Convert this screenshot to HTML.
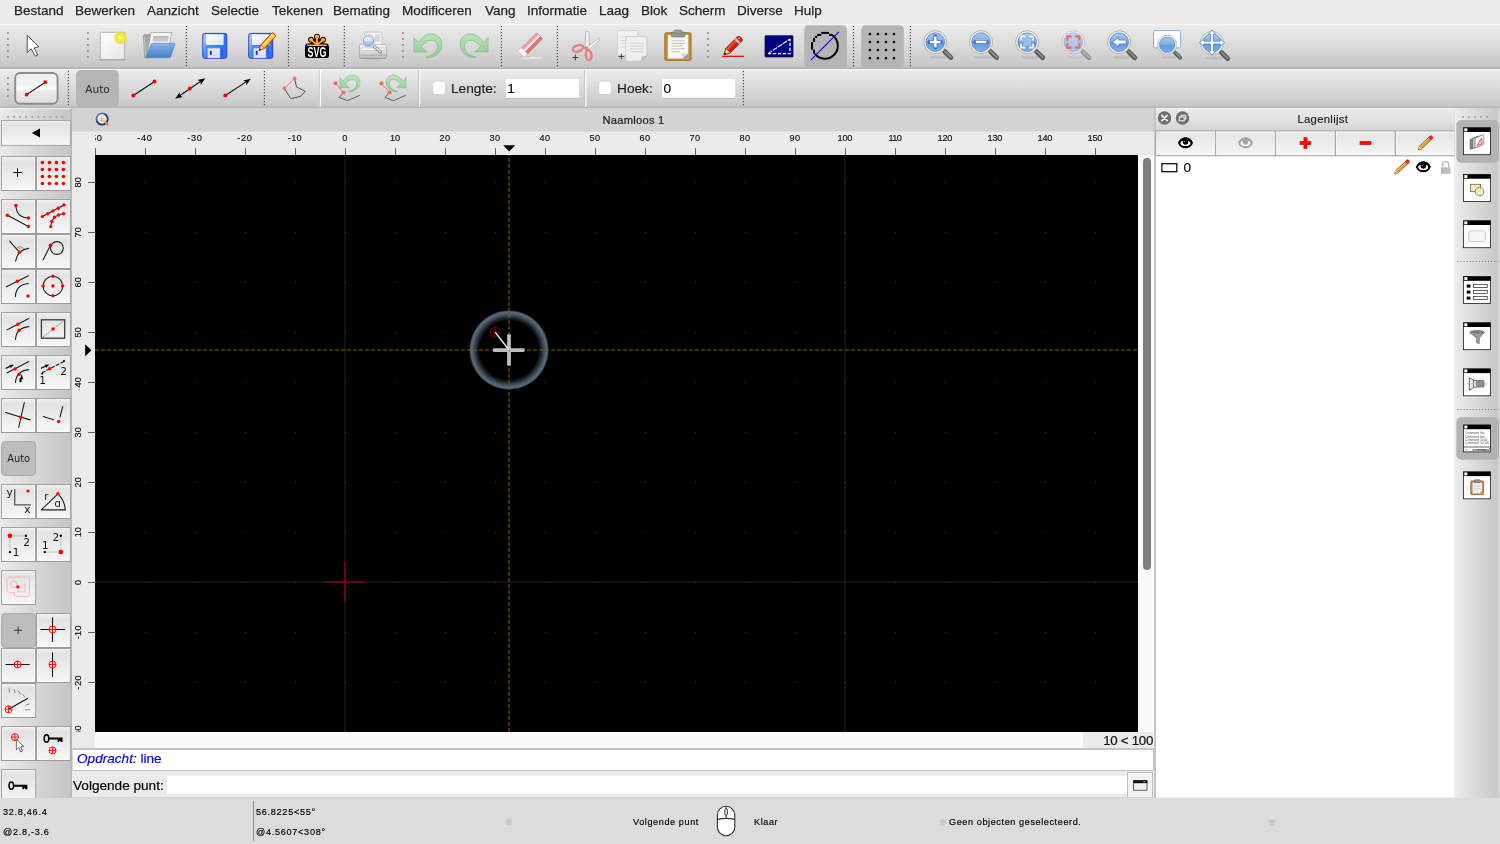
<!DOCTYPE html>
<html lang="nl"><head><meta charset="utf-8"><title>QCAD - Naamloos 1</title>
<style>
html,body{margin:0;padding:0}
body{width:1500px;height:844px;overflow:hidden;position:relative;background:#ececec;font-family:"Liberation Sans",sans-serif;color:#222;font-size:13px}
.a,.a>*{position:absolute}
body>div{will-change:transform}
.a *{box-sizing:border-box}
svg{display:block;overflow:visible;font-family:"Liberation Sans",sans-serif}
#menubar{left:0;top:0;width:1500px;height:24px;background:#ececec}
#menubar span{top:3px;font-size:13.5px;line-height:16px;white-space:nowrap;color:#242424;-webkit-text-stroke:.25px #242424}
#tb1{left:0;top:24px;width:1500px;height:45px;background:linear-gradient(#f9f9f9 0,#ececec 1.5px,#e8e8e8 12%,#dadada 50%,#cbcbcb 85%,#c5c5c5 95%,#b3b3b3 98%,#b3b3b3 100%)}
#tb2{left:0;top:69px;width:1500px;height:39px;background:linear-gradient(#f8f8f8 0,#ececec 1.5px,#e8e8e8 12%,#dadada 50%,#cccccc 85%,#c6c6c6 94%,#b8b8b8 98%,#b8b8b8 100%)}
.hv{width:2px;background-image:radial-gradient(circle at 1px 1px,#7a7a7a 0.75px,transparent 1.1px);background-size:2px 4px}
.hh{height:2px;background-image:radial-gradient(circle at 1px 1px,#8a8a8a 0.75px,transparent 1.1px);background-size:4px 2px}
.pr{background:#b4b4b4;border-radius:4px}
.ic{width:32px;height:32px}
#left{left:0;top:108px;width:72px;height:690px;background:linear-gradient(90deg,#ebebeb 0,#e6e6e6 10%,#d4d4d4 55%,#c6c6c6 97%,#b4b4b4 100%)}
.lb{width:34px;height:34px;border:1px solid #a2a2a2;background:linear-gradient(#e4e4e4 0,#ebebeb 45%,#f6f6f6 100%);box-shadow:inset 0 0 0 1px rgba(255,255,255,.55)}
.lb svg{left:-1px;top:-1px}
.lp{width:34px;height:34px;border:1px solid #a4a4a4;border-radius:4px;background:#bebebe}
#doc{left:72px;top:108px;width:1083px;height:690px;background:#ebebeb}
#doctitle{left:0;top:0;width:1083px;height:24px;background:linear-gradient(#d3d3d3 0,#d3d3d3 23px,#dcdcdc 23px,#dcdcdc 24px)}
#doctitle span{left:0;width:1123px;top:5px;text-align:center;font-size:11.2px;line-height:14px;color:#1c1c1c;letter-spacing:.25px}
#canvas{left:23px;top:47px;width:1043px;height:577px;background:#000;overflow:hidden}
#rtop,#rleft{overflow:hidden}
#vs{left:1066px;top:47px;width:16px;height:594px;background:#fafafa}
#vs i{left:5px;top:3px;width:8px;height:411.5px;border-radius:4px;background:#7f7f7f}
#hs{left:23px;top:624px;width:1059px;height:17px;background:#fafafa}
#zl{left:1011px;top:624px;width:70px;height:17px;background:#ebebeb;font-size:13.3px;line-height:17px;text-align:right;color:#111;padding-right:0;white-space:nowrap;letter-spacing:-.3px;overflow:hidden}
#hist{left:0;top:640px;width:1082px;height:23px;background:#fff;border:1px solid #c2c2c2;border-width:2px 1px 1px 1px;border-top-color:#c6c6c6;border-left-color:#d6d6d6}
#hist span{left:4px;top:1px;font-size:13.6px;line-height:16px;color:#0a0ac8;white-space:nowrap}
#cl{left:0;top:663px;width:1082px;height:27px;background:#ebebeb}
#cl span{left:1px;top:7px;font-size:13.6px;line-height:16px;color:#000;white-space:nowrap}
#cl i{left:95px;top:5px;width:960px;height:18px;background:#fff}
#cl b{left:1055px;top:1px;width:26px;height:26px;border:1px solid #bcbcbc;background:#f3f3f3;font-weight:normal}
#split{left:1154px;top:108px;width:2px;height:690px;background:linear-gradient(90deg,#cfcfcf 0,#bdbdbd 50%,#c6c6c6 100%)}
#panel{left:1156px;top:108px;width:298px;height:690px;background:#fff}
#ptitle{left:0;top:0;width:298px;height:23px;background:linear-gradient(#efefef,#e4e4e4 50%,#d6d6d6)}
#ptitle span{left:0;width:298px;top:4px;text-align:center;font-size:12.2px;line-height:14px;color:#1c1c1c;letter-spacing:.2px;padding-left:34px}
.pb{top:23px;width:59px;height:24px;border:1px solid #b0b0b0;background:linear-gradient(#e3e3e3,#efefef 50%,#f6f6f6)}
#right{left:1455px;top:108px;width:45px;height:690px;background:linear-gradient(90deg,#f0f0f0 0,#e9e9e9 6%,#d9d9d9 50%,#c8c8c8 92%,#d8d8d8 100%)}
.wi{width:28px;height:28px}
#status{left:0;top:798px;width:1500px;height:46px;background:#dcdcdc}
#status span{font-size:9.1px;line-height:12px;color:#111;white-space:nowrap;letter-spacing:.6px}
#status .n{letter-spacing:.72px}
#status i{width:6px;height:6px;border-radius:3px;background:#c9c9c9}
#doctitle span,#cl span,#zl{-webkit-text-stroke:.22px #1a1a1a}
#status span{-webkit-text-stroke:.16px #000;color:#000}
#hist span{-webkit-text-stroke:.2px #0a0ac8}
.tk{stroke:#1a1a1a;stroke-width:.16px}
</style></head>
<body>
<div id="menubar" class="a">
<span style="left:14px">Bestand</span><span style="left:75px">Bewerken</span><span style="left:147px">Aanzicht</span><span style="left:211px">Selectie</span><span style="left:272px">Tekenen</span><span style="left:333px">Bemating</span><span style="left:402px">Modificeren</span><span style="left:485px">Vang</span><span style="left:527px">Informatie</span><span style="left:599px">Laag</span><span style="left:641px">Blok</span><span style="left:679px">Scherm</span><span style="left:737px">Diverse</span><span style="left:794px">Hulp</span>
</div>
<div id="tb1" class="a">
<svg width="1500" height="45" viewBox="0 24 1500 45" style="left:0;top:0">
<defs>
<linearGradient id="gpage" x1="0" y1="0" x2="1" y2="1"><stop offset="0" stop-color="#fff"/><stop offset="1" stop-color="#e6e6e6"/></linearGradient>
<radialGradient id="gglow"><stop offset="0" stop-color="#ffffc8"/><stop offset=".35" stop-color="#f6ee3c"/><stop offset=".75" stop-color="#eee220" stop-opacity=".85"/><stop offset="1" stop-color="#eee220" stop-opacity="0"/></radialGradient>
<linearGradient id="gfold" x1="0" y1="0" x2="0" y2="1"><stop offset="0" stop-color="#86aee6"/><stop offset="1" stop-color="#4a80cc"/></linearGradient>
<linearGradient id="gsave" x1="0" y1="0" x2="1" y2="0.3"><stop offset="0" stop-color="#7fb2ff"/><stop offset=".12" stop-color="#a4caff"/><stop offset=".3" stop-color="#4a8cff"/><stop offset="1" stop-color="#2f72f4"/></linearGradient>
<linearGradient id="glabel" x1="0" y1="0" x2="1" y2="1"><stop offset="0" stop-color="#fff"/><stop offset="1" stop-color="#d6e2fc"/></linearGradient>
<linearGradient id="ggreen" x1="0" y1="0" x2="0" y2="1"><stop offset="0" stop-color="#c0e2b6"/><stop offset="1" stop-color="#8fcb96"/></linearGradient>
<linearGradient id="gprn" x1="0" y1="0" x2="0" y2="1"><stop offset="0" stop-color="#f6f6f6"/><stop offset="1" stop-color="#c4c4c4"/></linearGradient>
<linearGradient id="gglass" x1="0" y1="0" x2="0" y2="1"><stop offset="0" stop-color="#a9c6ec"/><stop offset=".48" stop-color="#84ace2"/><stop offset=".52" stop-color="#6397dc"/><stop offset="1" stop-color="#7eb0ea"/></linearGradient>
<linearGradient id="gglass2" x1="0" y1="0" x2="0" y2="1"><stop offset="0" stop-color="#e2ecf8"/><stop offset=".55" stop-color="#b4cdee"/><stop offset="1" stop-color="#94b6e4"/></linearGradient>
<linearGradient id="gpen" x1="0" y1="0" x2="0" y2="1"><stop offset="0" stop-color="#ff9c00"/><stop offset=".5" stop-color="#ffd21a"/><stop offset="1" stop-color="#ffb400"/></linearGradient>
<g id="hdl" fill="#8f8f8f"><rect x="-0.9" y="32.1" width="1.8" height="1.8"/><rect x="-0.9" y="38" width="1.8" height="1.8"/><rect x="-0.9" y="44" width="1.8" height="1.8"/><rect x="-0.9" y="50" width="1.8" height="1.8"/><rect x="-0.9" y="55.9" width="1.8" height="1.8"/></g>
<path id="sep1" d="M0 25.9V66.4" stroke="#4c4c4c" stroke-width="1.15" stroke-dasharray="1.25 1.75" fill="none"/>
<g id="mag"><ellipse cx="3" cy="15.200" rx="10" ry="1.700" fill="#000" fill-opacity=".08"/><path d="M9.400 9.600L15.600 15.700" stroke="#555" stroke-width="4.700" stroke-linecap="round"/><path d="M9.800 9.600L15.700 15.400" stroke="#8e8e8e" stroke-width="1.900" stroke-linecap="round"/><circle cy=".2" r="11.500" fill="#efefe9" stroke="#a6a69e" stroke-width=".8"/><circle cy=".2" r="9.300" fill="url(#gglass)" stroke="#5d87c6" stroke-width=".8"/></g>
<g id="magd" opacity=".45"><use href="#mag"/></g>
</defs>
<use href="#hdl" x="7.9"/>
<use href="#hdl" x="87.9"/>
<use href="#hdl" x="402.9"/>
<use href="#hdl" x="708"/>
<use href="#sep1" x="186.4"/>
<use href="#sep1" x="288.5"/>
<use href="#sep1" x="344.3"/>
<use href="#sep1" x="501.4"/>
<use href="#sep1" x="557.4"/>
<use href="#sep1" x="853.5"/>
<use href="#sep1" x="910.4"/>
<g transform="translate(0 22) scale(0.12666)">
<path d="M215 105V240L247 212 278 270 298 262 270 205 306 195Z" fill="#fff" stroke="#4a4a4a" stroke-width="7.5" stroke-linejoin="round"/>
<rect x="786" y="290" width="204" height="14" rx="6" fill="#000" fill-opacity=".18"/>
<rect x="792" y="82" width="192" height="214" rx="9" fill="url(#gpage)" stroke="#a2a2a2" stroke-width="6"/>
<path d="M806 160h10M806 216h10" stroke="#ccc" stroke-width="4"/>
<circle cx="952" cy="125" r="56" fill="url(#gglow)"/>
<path d="M1142 282L1133 112q0-12 12-12h36l8 12h20l-40 170z" fill="#a9a9a9" stroke="#7c7c7c" stroke-width="5" stroke-linejoin="round"/>
<path d="M1146 270L1140 118" stroke="#e6e6e6" stroke-width="4" fill="none"/>
<path d="M1160 262L1192 84h164l-18 96z" fill="#fbfbfb" stroke="#8d8d8d" stroke-width="5" stroke-linejoin="round"/>
<path d="M1212 108h124l-10 48h-124z" fill="#c9c9c9"/><path d="M1214 118h118" stroke="#b4b4b4" stroke-width="8"/>
<path d="M1166 282q-12 0-8-12L1190 178q4-10 14-10h168q10 0 7 10l-30 94q-4 10-14 10z" fill="url(#gfold)" stroke="#4a7fc8" stroke-width="5" stroke-linejoin="round"/>
<path d="M1200 180h166" stroke="#9cc0ee" stroke-width="5" fill="none"/>
</g>
<g transform="translate(185 22) scale(0.12666)">
<g transform="translate(0 0)"><rect x="140" y="90" width="190" height="197" rx="16" fill="url(#gsave)" stroke="#2b2bb4" stroke-width="7"/><rect x="166" y="97" width="139" height="84" rx="4" fill="url(#glabel)"/><rect x="180" y="206" width="96" height="78" fill="#e4e8f4"/><rect x="180" y="206" width="96" height="78" fill="none" stroke="#aab4d8" stroke-width="4"/><rect x="196" y="226" width="15" height="36" rx="5" ry="6" fill="#1030e0"/><path d="M290 204v76" stroke="#2a60f0" stroke-width="14"/><path d="M180 262h96" stroke="#c4c8dc" stroke-width="5"/></g>
<g transform="translate(363 0)"><rect x="140" y="90" width="190" height="197" rx="16" fill="url(#gsave)" stroke="#2b2bb4" stroke-width="7"/><rect x="166" y="97" width="139" height="84" rx="4" fill="url(#glabel)"/><rect x="180" y="206" width="96" height="78" fill="#e4e8f4"/><rect x="180" y="206" width="96" height="78" fill="none" stroke="#aab4d8" stroke-width="4"/><rect x="196" y="226" width="15" height="36" rx="5" ry="6" fill="#1030e0"/><path d="M290 204v76" stroke="#2a60f0" stroke-width="14"/><path d="M180 262h96" stroke="#c4c8dc" stroke-width="5"/></g>
<g transform="translate(585 225) rotate(-47.2)"><path d="M0 0L42-20H164q14 0 14 14V6q0 14-14 14H42Z" fill="url(#gpen)" stroke="#c4300e" stroke-width="7" stroke-linejoin="round"/><path d="M44-6H160" stroke="#ffee90" stroke-width="10"/><path d="M160-18v36" stroke="#f4e0c8" stroke-width="8"/><path d="M0 0L42-20V20Z" fill="#f0d6b0" stroke="#b04818" stroke-width="5" stroke-linejoin="round"/><path d="M0 0L16-8V8Z" fill="#222"/></g>
</g>
<g transform="translate(298 26) scale(0.06667)">
<g fill="#000" stroke="#000" stroke-width="26" stroke-linejoin="round" stroke-linecap="round"><circle cx="285" cy="160" r="31"/><circle cx="195" cy="206" r="30"/><circle cx="375" cy="206" r="30"/><path d="M285 290V162M285 290L197 208M285 290L373 208M140 290H430" stroke-width="58"/></g>
<path d="M150 292L285 150 420 292z" fill="#000"/><rect x="105" y="284" width="360" height="196" rx="34" fill="#000"/>
<g fill="#ffa827" stroke="#ffa827" stroke-linecap="round"><circle cx="285" cy="160" r="31" stroke="none"/><circle cx="195" cy="206" r="30" stroke="none"/><circle cx="375" cy="206" r="30" stroke="none"/><path d="M285 282V170" stroke-width="32"/><path d="M280 282L203 212M290 282L367 212" stroke-width="30"/><path d="M146 288H424" stroke-width="24"/></g>
<text x="285" y="462" font-size="222" font-weight="bold" fill="#fff" text-anchor="middle" textLength="284" lengthAdjust="spacingAndGlyphs">SVG</text>
</g>
<g transform="translate(350 22) scale(0.12666)">
<ellipse cx="182" cy="286" rx="108" ry="10" fill="#000" fill-opacity=".2"/>
<rect x="118" y="80" width="134" height="110" rx="6" fill="#fafafa" stroke="#b0b0b0" stroke-width="5"/>
<rect x="196" y="96" width="44" height="60" fill="#d8d8d8"/>
<rect x="74" y="176" width="216" height="108" rx="14" fill="url(#gprn)" stroke="#9a9a9a" stroke-width="5"/>
<rect x="92" y="206" width="180" height="18" rx="6" fill="#fff" stroke="#aaa" stroke-width="3"/>
<path d="M82 262h200" stroke="#a8a8a8" stroke-width="8"/>
<path d="M186 190L240 236" stroke="#8a8a8a" stroke-width="26" stroke-linecap="round"/><path d="M190 192L238 234" stroke="#e0e0e0" stroke-width="13" stroke-linecap="round"/>
<circle cx="146" cy="150" r="54" fill="#f4f4f4" stroke="#c4c4c4" stroke-width="4"/><circle cx="146" cy="150" r="42" fill="url(#gglass2)" stroke="#5a8cd2" stroke-width="6"/><ellipse cx="138" cy="136" rx="26" ry="18" fill="#fff" fill-opacity=".5"/>
</g>
<g transform="translate(405 26) scale(0.06000)">
<path d="M148 190L148 432 365 432 275 340C330 280 380 240 430 240 500 240 540 280 540 340 540 420 470 490 350 515L352 530C500 530 615 440 615 310 615 200 540 130 440 130 350 130 280 200 215 270Z" fill="url(#ggreen)" stroke="#72b481" stroke-width="9" stroke-linejoin="round"/>
<g transform="translate(1533 0) scale(-1 1)"><path d="M148 190L148 432 365 432 275 340C330 280 380 240 430 240 500 240 540 280 540 340 540 420 470 490 350 515L352 530C500 530 615 440 615 310 615 200 540 130 440 130 350 130 280 200 215 270Z" fill="url(#ggreen)" stroke="#72b481" stroke-width="9" stroke-linejoin="round"/></g>
</g>
<g transform="translate(500 22) scale(0.12666)">
<ellipse cx="245" cy="282" rx="88" ry="8" fill="#fff" fill-opacity=".55"/><ellipse cx="200" cy="276" rx="50" ry="6" fill="#000" fill-opacity=".12"/>
<g transform="translate(240 181) rotate(-45)"><rect x="-104" y="-35" width="208" height="70" rx="8" fill="#e4858a"/><rect x="-104" y="-35" width="208" height="24" rx="6" fill="#eda2a4"/><rect x="-70" y="-11" width="174" height="20" fill="#f1eded"/><rect x="-70" y="9" width="174" height="26" fill="#dc7278"/><rect x="-104" y="-35" width="38" height="70" rx="6" fill="#f6f6f6" stroke="#c4c4c4" stroke-width="4"/><path d="M104-30v60" stroke="#a9a0a0" stroke-width="5"/></g>
<path d="M672 200L676 84q2-14 14-14 12 0 12 14L706 196z" fill="#f1f1f1" stroke="#a5a5a5" stroke-width="5" stroke-linejoin="round"/>
<path d="M690 196L784 124q6 6 2 18L708 214z" fill="#f6f6f6" stroke="#a5a5a5" stroke-width="5" stroke-linejoin="round"/>
<ellipse cx="616" cy="208" rx="42" ry="24" transform="rotate(-18 616 208)" fill="none" stroke="#e3838a" stroke-width="20"/>
<ellipse cx="700" cy="262" rx="22" ry="40" transform="rotate(-8 700 262)" fill="none" stroke="#e3838a" stroke-width="20"/>
<path d="M654 198L690 196 700 224 672 224z" fill="#e3838a"/>
<path d="M572 280h46M595 257v46" stroke="#222" stroke-width="6.5"/>
<rect x="928" y="68" width="160" height="196" rx="8" fill="#f0f0f0" stroke="#c6c6c6" stroke-width="5"/>
<path d="M950 120h60M950 146h60M950 172h60M950 198h60" stroke="#d8d8d8" stroke-width="7"/>
<path d="M993 123q0-8 8-8h150q8 0 8 8v146l-42 40H1001q-8 0-8-8z" fill="#efefef" stroke="#bdbdbd" stroke-width="5" stroke-linejoin="round"/>
<path d="M1026 168h106M1026 190h106M1026 212h106M1026 234h106" stroke="#d2d2d2" stroke-width="7"/>
<path d="M1159 269l-42 40 4-34z" fill="#c4c4c4" stroke="#a8a8a8" stroke-width="4" stroke-linejoin="round"/>
<path d="M935 272h46M958 249v46" stroke="#222" stroke-width="6.5"/>
</g>
<g transform="translate(655 22) scale(0.12666)">
<rect x="77" y="84" width="208" height="220" rx="12" fill="#c98a2a" stroke="#9c671a" stroke-width="6"/>
<rect x="100" y="100" width="164" height="190" rx="3" fill="#f7f7f5" stroke="#a89a80" stroke-width="3"/>
<path d="M130 148h106M130 170h106M130 190h88M130 212h106M130 234h66" stroke="#c6c6c6" stroke-width="8"/>
<path d="M264 246v44h-50z" fill="#9a9a9a"/><path d="M214 290v-44h50z" fill="#d8d8d8"/>
<rect x="128" y="80" width="108" height="38" rx="10" fill="#96968c" stroke="#6c6c64" stroke-width="5"/><rect x="152" y="64" width="60" height="24" rx="8" fill="#a4a49a" stroke="#6c6c64" stroke-width="5"/>
<g transform="translate(545 258) rotate(-45)"><path d="M0 0L46-25H172q18 0 18 18V7q0 18-18 18H46Z" fill="#e0201a" stroke="#5e2a0a" stroke-width="6" stroke-linejoin="round"/><path d="M48-12H140" stroke="#f0602a" stroke-width="12"/><path d="M48 10H140" stroke="#c8101a" stroke-width="10"/><rect x="142" y="-25" width="18" height="50" fill="#d4c4c4" stroke="#8a6a6a" stroke-width="2"/><circle cx="176" cy="-8" r="8" fill="#ff8a80"/><path d="M0 0L46-25V25Z" fill="#ecc9a0" stroke="#5e3a1a" stroke-width="5" stroke-linejoin="round"/><path d="M0 0L18-10V10Z" fill="#111"/></g>
<path d="M530 271H703" stroke="#f00" stroke-width="10"/>
<rect x="868.5" y="108" width="221" height="168" rx="4" fill="#000083" stroke="#14142e" stroke-width="6"/>
<path d="M892 250H1066V134" fill="none" stroke="#fff" stroke-width="10" stroke-dasharray="26 13"/><path d="M892 250L1066 134" stroke="#fff" stroke-width="8.5" stroke-dasharray="40 7"/>
<rect x="1178" y="25" width="337" height="340" rx="34" fill="#b5b5b5"/>
</g>
<g transform="translate(800 24) scale(0.07334)">
<path d="M445.900 156.400A176 176 0 1 1 203.200 407.800" fill="none" stroke="#000" stroke-width="27"/>
<g fill="#000"><rect x="290" y="108" width="105" height="27"/><rect x="235" y="135" width="55" height="27"/><rect x="395" y="135" width="55" height="27"/><rect x="205" y="162" width="30" height="28"/><rect x="178" y="190" width="27" height="55"/><rect x="150" y="245" width="28" height="105"/><rect x="178" y="350" width="27" height="55"/></g>
<path d="M150 490L530 108" stroke="#0000ff" stroke-width="14"/>
</g>
<g transform="translate(800 22) scale(0.12666)">
<rect x="483" y="25" width="337" height="340" rx="34" fill="#b5b5b5"/>
<rect x="543" y="86" width="18" height="18" fill="#000"/>
<rect x="606" y="86" width="18" height="18" fill="#000"/>
<rect x="670" y="86" width="18" height="18" fill="#000"/>
<rect x="733" y="86" width="18" height="18" fill="#000"/>
<rect x="543" y="149" width="18" height="18" fill="#000"/>
<rect x="606" y="149" width="18" height="18" fill="#000"/>
<rect x="670" y="149" width="18" height="18" fill="#000"/>
<rect x="733" y="149" width="18" height="18" fill="#000"/>
<rect x="543" y="212" width="18" height="18" fill="#000"/>
<rect x="606" y="212" width="18" height="18" fill="#000"/>
<rect x="670" y="212" width="18" height="18" fill="#000"/>
<rect x="733" y="212" width="18" height="18" fill="#000"/>
<rect x="543" y="276" width="18" height="18" fill="#000"/>
<rect x="606" y="276" width="18" height="18" fill="#000"/>
<rect x="670" y="276" width="18" height="18" fill="#000"/>
<rect x="733" y="276" width="18" height="18" fill="#000"/>
</g>
<use href="#mag" x="935.3" y="41.9"/><path d="M929.6 41.9h11.4M935.3 36.2v11.4" stroke="#3f6fc0" stroke-width="4" stroke-linecap="round"/><path d="M930 41.9h10.600M935.3 36.6v10.600" stroke="#fff" stroke-width="2.500"/>
<use href="#mag" x="981.1" y="41.9"/><path d="M975.4 41.9h11.4" stroke="#3f6fc0" stroke-width="4" stroke-linecap="round"/><path d="M975.8 41.9h10.600" stroke="#fff" stroke-width="2.500"/>
<use href="#mag" x="1027.2" y="42"/><rect x="1023.2" y="38.2" width="8" height="7.600" fill="#9dbdee"/><path d="M1021.200 40.400v-4h4.200M1029 36.400h4.200v4M1033.200 43.600v4h-4.200M1025.400 47.600h-4.200v-4" fill="none" stroke="#fff" stroke-width="1.700"/>
<g opacity=".5"><use href="#mag" x="1073.3" y="42"/></g><rect x="1069.3" y="38.2" width="8" height="7.600" fill="#b9cdee" fill-opacity=".8"/><path d="M1067.300 40.400v-4h4.200M1075.100 36.400h4.200v4M1079.300 43.600v4h-4.200M1071.500 47.600h-4.200v-4" fill="none" stroke="#ee6a6a" stroke-width="2.100"/>
<use href="#mag" x="1119.2" y="42"/><path d="M1112.600 42l6.200-4.800v2.900h7.400v3.800h-7.400v2.900z" fill="#fff" stroke="#3f6fc0" stroke-width=".7" stroke-linejoin="round"/>
<rect x="1153.600" y="30.600" width="27" height="17.200" rx="1" fill="#fff" stroke="#7fa4dc" stroke-width=".9"/>
<g transform="translate(1167.200 44.600) scale(.83)"><use href="#mag"/></g>
<use href="#mag" x="1212" y="42.800"/><path d="M1212 30l3.400 4.400h-2v6.800h6.800v-2l4.400 3.400-4.400 3.400v-2h-6.800v6.800h2l-3.400 4.400-3.400-4.400h2v-6.800h-6.800v2l-4.400-3.400 4.400-3.400v2h6.800v-6.800h-2z" fill="#fff" stroke="#4f80cc" stroke-width=".8" stroke-linejoin="round"/>
</svg></div>
<div id="tb2" class="a">
<svg width="1500" height="39" viewBox="0 69 1500 39" style="left:0;top:0">
<defs><linearGradient id="gbtn" x1="0" y1="0" x2="0" y2="1"><stop offset="0" stop-color="#ededed"/><stop offset=".4" stop-color="#f3f3f3"/><stop offset=".52" stop-color="#fbfbfb"/><stop offset=".6" stop-color="#ebebeb"/><stop offset="1" stop-color="#dedede"/></linearGradient>
<path id="sep2" d="M0 71V105.400" stroke="#4c4c4c" stroke-width="1.15" stroke-dasharray="1.25 1.75" fill="none"/>
<g id="vsep"><rect x="-1.100" y="70.400" width="1" height="36.400" fill="#b9b9b9"/><rect x="-0.300" y="70.400" width="1.300" height="36.400" fill="#fff"/></g>
<path id="ah" d="M0 0L-7.400-2.900-5.600 0-7.400 2.900Z" fill="#000"/>
</defs>
<g fill="#8f8f8f"><rect x="7" y="77.100" width="1.800" height="1.800"/><rect x="7" y="83.100" width="1.800" height="1.800"/><rect x="7" y="88.900" width="1.800" height="1.800"/><rect x="7" y="95.100" width="1.800" height="1.800"/></g>
<rect x="15.200" y="73.050" width="42.400" height="30.750" rx="5" fill="url(#gbtn)" stroke="#8d8d8d" stroke-width="1.900"/>
<path d="M26.600 94.600L45.200 82.200" stroke="#111" stroke-width="1.100"/><circle cx="26.600" cy="94.600" r="1.900" fill="#f00"/><circle cx="45.200" cy="82.200" r="1.900" fill="#f00"/>
<use href="#sep2" x="68.400"/>
<rect x="76" y="70" width="42.800" height="37.200" rx="5" fill="#b5b5b5"/>
<text x="97.500" y="92.900" font-family="DejaVu Sans,sans-serif" font-size="10.500" fill="#2a2a2a" text-anchor="middle">Auto</text>
<path d="M133.400 95.500L154.500 81.500" stroke="#111" stroke-width="1.100"/><circle cx="133.400" cy="95.500" r="2" fill="#f00"/><circle cx="154.500" cy="81.500" r="2" fill="#f00"/>
<path d="M177.800 97L202.600 80" stroke="#111" stroke-width="1.100"/><use href="#ah" transform="translate(205.200 78.300) rotate(-34.500)"/><use href="#ah" transform="translate(175.200 98.800) rotate(145.500)"/><circle cx="189.800" cy="88.500" r="2" fill="#f00"/>
<path d="M225.300 95.500L248 80.600" stroke="#111" stroke-width="1.100"/><use href="#ah" transform="translate(250.800 78.800) rotate(-33.500)"/><circle cx="225.300" cy="95.500" r="2" fill="#f00"/>
<use href="#sep2" x="264.400"/>
<path d="M294.600 78.400L296.500 86.900 305.300 91.300 300.500 96.400 290.800 98.600 284.400 88.500" fill="none" stroke="#505050" stroke-width="1"/><path d="M294.600 78.400L284.400 88.500" stroke="#f07878" stroke-width="1"/><circle cx="294.600" cy="78.400" r="1.900" fill="#f27272"/><circle cx="284.400" cy="88.500" r="1.900" fill="#f27272"/>
<use href="#vsep" x="320"/>
<g transform="translate(325 68) scale(0.06000)">
<path d="M290 430L235 490 375 545 580 455" fill="none" stroke="#4a4a4a" stroke-width="14" stroke-linejoin="round"/>
<g transform="translate(145 22.700) scale(.71)"><path d="M148 190L148 432 365 432 275 340C330 280 380 240 430 240 500 240 540 280 540 340 540 420 470 490 350 515L352 530C500 530 615 440 615 310 615 200 540 130 440 130 350 130 280 200 215 270Z" fill="url(#ggreen)" stroke="#72b481" stroke-width="11" stroke-linejoin="round"/></g>
<path d="M175 255L308 408" stroke="#f26868" stroke-width="15"/><circle cx="175" cy="255" r="34" fill="#f46a6a"/><circle cx="308" cy="408" r="34" fill="#f46a6a"/>
<path d="M1055 430L1000 490 1140 545 1345 455" fill="none" stroke="#4a4a4a" stroke-width="14" stroke-linejoin="round"/>
<g transform="translate(1600 0) scale(-1 1)"><g transform="translate(145 22.700) scale(.71)"><path d="M148 190L148 432 365 432 275 340C330 280 380 240 430 240 500 240 540 280 540 340 540 420 470 490 350 515L352 530C500 530 615 440 615 310 615 200 540 130 440 130 350 130 280 200 215 270Z" fill="url(#ggreen)" stroke="#72b481" stroke-width="11" stroke-linejoin="round"/></g></g>
<path d="M940 255L1075 408" stroke="#f26868" stroke-width="15"/><circle cx="940" cy="255" r="34" fill="#f46a6a"/><circle cx="1075" cy="408" r="34" fill="#f46a6a"/>
</g>
<use href="#vsep" x="419.200"/>
<rect x="432.700" y="81" width="12.800" height="13.600" rx="3.200" fill="#fff" stroke="#cdcdcd" stroke-width=".9"/>
<text class="tk" x="451" y="93.100" font-size="13.700" fill="#1c1c1c" letter-spacing="0">Lengte:</text>
<rect x="505.900" y="78.700" width="73.100" height="19.600" fill="#fff"/><path d="M505.900 98.300h73.100" stroke="#b0b0b0" stroke-width=".8"/><path d="M505.900 78.700h73.100" stroke="#dcdcdc" stroke-width=".6"/>
<text class="tk" x="507.200" y="93.100" font-size="13.700" fill="#000">1</text>
<use href="#vsep" x="585.400"/>
<rect x="598.600" y="81" width="12.800" height="13.600" rx="3.200" fill="#fff" stroke="#cdcdcd" stroke-width=".9"/>
<text class="tk" x="617" y="93.100" font-size="13.700" fill="#1c1c1c" letter-spacing="0">Hoek:</text>
<rect x="662" y="78.700" width="73.200" height="19.600" fill="#fff"/><path d="M662 98.300h73.200" stroke="#b0b0b0" stroke-width=".8"/><path d="M662 78.700h73.200" stroke="#dcdcdc" stroke-width=".6"/>
<text class="tk" x="663.600" y="93.100" font-size="13.700" fill="#000">0</text>
<use href="#sep2" x="743.400"/>
</svg></div>
<div id="left" class="a">
<svg width="72" height="690" viewBox="0 108 72 690" style="left:0;top:0">
<defs><linearGradient id="lbg" x1="0" y1="0" x2="0" y2="1"><stop offset="0" stop-color="#eeeeee"/><stop offset="0.17" stop-color="#e3e3e3"/><stop offset="0.5" stop-color="#ebebeb"/><stop offset="1" stop-color="#f7f7f7"/></linearGradient><g id="rc" fill="none" stroke="#f00" stroke-width="0.9"><circle r="3.5"/><path d="M-3.5 0h7M0-3.5v7"/></g><g id="key" fill="#000"><ellipse cx="0.300" cy="0" rx="2.300" ry="3.700" fill="none" stroke="#000" stroke-width="1.500"/><path d="M3 -0.9h13.4v4.6h-2.3v-1h-1.2v1h-1.5v-2.6H3z"/></g></defs>
<rect x="0" y="108" width="71" height="1.300" fill="#fff" fill-opacity=".5"/>
<g fill="#9a9a9a">
<rect x="7.2" y="116" width="1.7" height="1.7"/>
<rect x="13.2" y="116" width="1.7" height="1.7"/>
<rect x="19.3" y="116" width="1.7" height="1.7"/>
<rect x="25.3" y="116" width="1.7" height="1.7"/>
<rect x="31.4" y="116" width="1.7" height="1.7"/>
<rect x="37.5" y="116" width="1.7" height="1.7"/>
<rect x="43.5" y="116" width="1.7" height="1.7"/>
<rect x="49.6" y="116" width="1.7" height="1.7"/>
<rect x="55.6" y="116" width="1.7" height="1.7"/>
<rect x="61.6" y="116" width="1.7" height="1.7"/>
</g>
<rect x="1.6" y="120.7" width="68.8" height="24.6" fill="url(#lbg)" stroke="#9b9b9b"/>
<rect x="2.6" y="121.7" width="66.8" height="22.6" fill="none" stroke="#fff" stroke-opacity=".55"/>
<path d="M31.8 133l8.2-4.4v8.8z" fill="#000"/>
<rect x="1.6" y="156.6" width="34.0" height="33.9" fill="url(#lbg)" stroke="#9b9b9b"/>
<rect x="2.6" y="157.6" width="32.0" height="31.9" fill="none" stroke="#fff" stroke-opacity=".55"/>
<rect x="36.5" y="156.6" width="33.8" height="33.9" fill="url(#lbg)" stroke="#9b9b9b"/>
<rect x="37.5" y="157.6" width="31.799999999999997" height="31.9" fill="none" stroke="#fff" stroke-opacity=".55"/>
<path d="M13.7 172.5h7.6M17.5 168.7v7.6" fill="none" stroke="#000" stroke-width="0.95" stroke-linecap="round" />
<circle cx="42.4" cy="162.6" r="1.8" fill="#f00"/>
<circle cx="49.4" cy="162.6" r="1.8" fill="#f00"/>
<circle cx="56.4" cy="162.6" r="1.8" fill="#f00"/>
<circle cx="63.4" cy="162.6" r="1.8" fill="#f00"/>
<circle cx="42.4" cy="169.5" r="1.8" fill="#f00"/>
<circle cx="49.4" cy="169.5" r="1.8" fill="#f00"/>
<circle cx="56.4" cy="169.5" r="1.8" fill="#f00"/>
<circle cx="63.4" cy="169.5" r="1.8" fill="#f00"/>
<circle cx="42.4" cy="176.5" r="1.8" fill="#f00"/>
<circle cx="49.4" cy="176.5" r="1.8" fill="#f00"/>
<circle cx="56.4" cy="176.5" r="1.8" fill="#f00"/>
<circle cx="63.4" cy="176.5" r="1.8" fill="#f00"/>
<circle cx="42.4" cy="183.5" r="1.8" fill="#f00"/>
<circle cx="49.4" cy="183.5" r="1.8" fill="#f00"/>
<circle cx="56.4" cy="183.5" r="1.8" fill="#f00"/>
<circle cx="63.4" cy="183.5" r="1.8" fill="#f00"/>
<rect x="1.6" y="199.6" width="34.0" height="33.9" fill="url(#lbg)" stroke="#9b9b9b"/>
<rect x="2.6" y="200.6" width="32.0" height="31.9" fill="none" stroke="#fff" stroke-opacity=".55"/>
<rect x="36.5" y="199.6" width="33.8" height="33.9" fill="url(#lbg)" stroke="#9b9b9b"/>
<rect x="37.5" y="200.6" width="31.799999999999997" height="31.9" fill="none" stroke="#fff" stroke-opacity=".55"/>
<path d="M7.4 215.3L28.4 226.6" fill="none" stroke="#1e1e1e" stroke-width="1.1" stroke-linecap="round" />
<path d="M15.9 205.4C16.2 213.5 20.5 217.6 28.4 218" fill="none" stroke="#1e1e1e" stroke-width="1.1" stroke-linecap="round" />
<circle cx="15.9" cy="205.4" r="1.75" fill="#f00"/>
<circle cx="7.4" cy="215.3" r="1.75" fill="#f00"/>
<circle cx="28.4" cy="218" r="1.75" fill="#f00"/>
<circle cx="28.4" cy="226.6" r="1.75" fill="#f00"/>
<path d="M42.4 216.6L63.9 205" fill="none" stroke="#1e1e1e" stroke-width="1.1" stroke-linecap="round" />
<path d="M50.8 226.6C51.2 219.5 55 214.8 63.6 213.8" fill="none" stroke="#1e1e1e" stroke-width="1.1" stroke-linecap="round" />
<circle cx="42.4" cy="216.6" r="1.7" fill="#f00"/>
<circle cx="47.7" cy="213.8" r="1.7" fill="#f00"/>
<circle cx="52.9" cy="211" r="1.7" fill="#f00"/>
<circle cx="58.3" cy="208.2" r="1.7" fill="#f00"/>
<circle cx="63.9" cy="205" r="1.7" fill="#f00"/>
<circle cx="50.8" cy="226.6" r="1.7" fill="#f00"/>
<circle cx="51.9" cy="221.4" r="1.7" fill="#f00"/>
<circle cx="54.5" cy="217.3" r="1.7" fill="#f00"/>
<circle cx="58.6" cy="215" r="1.7" fill="#f00"/>
<circle cx="63.6" cy="213.8" r="1.7" fill="#f00"/>
<rect x="1.6" y="234.6" width="34.0" height="33.9" fill="url(#lbg)" stroke="#9b9b9b"/>
<rect x="2.6" y="235.6" width="32.0" height="31.9" fill="none" stroke="#fff" stroke-opacity=".55"/>
<rect x="36.5" y="234.6" width="33.8" height="33.9" fill="url(#lbg)" stroke="#9b9b9b"/>
<rect x="37.5" y="235.6" width="31.799999999999997" height="31.9" fill="none" stroke="#fff" stroke-opacity=".55"/>
<path d="M9.7 241.2L19.5 252.3" fill="none" stroke="#1e1e1e" stroke-width="1.1" stroke-linecap="round" />
<path d="M19.5 252.3C22.5 250 25.5 248.8 28.6 248.4" fill="none" stroke="#1e1e1e" stroke-width="1.1" stroke-linecap="round" />
<path d="M19.5 252.3C17.2 255 16.1 258 15.6 261.2" fill="none" stroke="#1e1e1e" stroke-width="1.1" stroke-linecap="round" />
<path d="M16.6 248.7C18 246.2 21.5 245.8 23.4 248.6" fill="none" stroke="#333" stroke-width="0.6" stroke-linecap="round" />
<circle cx="20" cy="248.6" r="0.5" fill="#333"/>
<circle cx="19.5" cy="252.3" r="1.75" fill="#f00"/>
<circle cx="56.9" cy="248" r="6.4" fill="none" stroke="#1e1e1e" stroke-width="1.1"/>
<path d="M50.5 245.2L43.1 259.7" fill="none" stroke="#1e1e1e" stroke-width="1.1" stroke-linecap="round" />
<circle cx="50.5" cy="245.2" r="1.75" fill="#f00"/>
<rect x="1.6" y="269.6" width="34.0" height="33.9" fill="url(#lbg)" stroke="#9b9b9b"/>
<rect x="2.6" y="270.6" width="32.0" height="31.9" fill="none" stroke="#fff" stroke-opacity=".55"/>
<rect x="36.5" y="269.6" width="33.8" height="33.9" fill="url(#lbg)" stroke="#9b9b9b"/>
<rect x="37.5" y="270.6" width="31.799999999999997" height="31.9" fill="none" stroke="#fff" stroke-opacity=".55"/>
<path d="M6.4 286.7L28.4 275.8" fill="none" stroke="#1e1e1e" stroke-width="1.1" stroke-linecap="round" />
<path d="M15.4 296.4C15.8 289 20.5 284.3 28.4 283.5" fill="none" stroke="#1e1e1e" stroke-width="1.1" stroke-linecap="round" />
<circle cx="17.4" cy="281.2" r="1.75" fill="#f00"/>
<circle cx="28" cy="296" r="1.75" fill="#f00"/>
<circle cx="52.9" cy="286" r="9.8" fill="none" stroke="#1e1e1e" stroke-width="1.1"/>
<circle cx="52.9" cy="286" r="1.7" fill="#f00"/>
<circle cx="52.9" cy="276.2" r="1.7" fill="#f00"/>
<circle cx="52.9" cy="295.8" r="1.7" fill="#f00"/>
<circle cx="43.1" cy="286" r="1.7" fill="#f00"/>
<circle cx="62.7" cy="286" r="1.7" fill="#f00"/>
<rect x="1.6" y="312.6" width="34.0" height="33.9" fill="url(#lbg)" stroke="#9b9b9b"/>
<rect x="2.6" y="313.6" width="32.0" height="31.9" fill="none" stroke="#fff" stroke-opacity=".55"/>
<rect x="36.5" y="312.6" width="33.8" height="33.9" fill="url(#lbg)" stroke="#9b9b9b"/>
<rect x="37.5" y="313.6" width="31.799999999999997" height="31.9" fill="none" stroke="#fff" stroke-opacity=".55"/>
<path d="M7.2 329.8L28.8 318.6" fill="none" stroke="#1e1e1e" stroke-width="1.1" stroke-linecap="round" />
<path d="M15.5 339.4C16 332 20.6 327.4 28.8 326.6" fill="none" stroke="#1e1e1e" stroke-width="1.1" stroke-linecap="round" />
<circle cx="17.9" cy="324.2" r="1.75" fill="#f00"/>
<circle cx="19.2" cy="330.3" r="1.75" fill="#f00"/>
<rect x="41.4" y="319.8" width="23.3" height="18.4" fill="none" stroke="#3a3a3a" stroke-width="1.3"/>
<path d="M43 337L63.5 321" fill="none" stroke="#666" stroke-width="0.6" stroke-linecap="round" stroke-dasharray="2 1.4"/>
<circle cx="53" cy="329" r="1.75" fill="#f00"/>
<rect x="1.6" y="355.6" width="34.0" height="33.9" fill="url(#lbg)" stroke="#9b9b9b"/>
<rect x="2.6" y="356.6" width="32.0" height="31.9" fill="none" stroke="#fff" stroke-opacity=".55"/>
<rect x="36.5" y="355.6" width="33.8" height="33.9" fill="url(#lbg)" stroke="#9b9b9b"/>
<rect x="37.5" y="356.6" width="31.799999999999997" height="31.9" fill="none" stroke="#fff" stroke-opacity=".55"/>
<path d="M7.2 372.8L28.8 361.6" fill="none" stroke="#1e1e1e" stroke-width="1.1" stroke-linecap="round" />
<path d="M15.5 382.4C16 375 20.6 370.4 28.8 369.6" fill="none" stroke="#1e1e1e" stroke-width="1.1" stroke-linecap="round" />
<circle cx="15" cy="369" r="1.75" fill="#f00"/>
<circle cx="19.2" cy="374.3" r="1.75" fill="#f00"/>
<path d="M6 368.6l4.4-2 .5 1 2.4-2.6-3.6.3.4.8-4.5 2zM19.6 381.6l.4-3.6 1 .4.6-3.5 1.2 4-1.1-.3-.7 3.4z" fill="#000" stroke="#000" stroke-width=".6"/>
<path d="M42.4 372.6L64 361.4" fill="none" stroke="#1e1e1e" stroke-width="1.1" stroke-linecap="round" stroke-dasharray="3 2.2"/>
<path d="M41.4 368.4l4.4-2 .5 1 2.4-2.6-3.6.3.4.8-4.5 2z" fill="#000" stroke="#000" stroke-width=".6"/>
<circle cx="42.2" cy="373.6" r="1.1" fill="#000"/>
<circle cx="64" cy="361" r="1.1" fill="#000"/>
<circle cx="49.6" cy="368.7" r="1.75" fill="#f00"/>
<text x="42.6" y="384.2" font-family="DejaVu Sans,sans-serif" font-size="10.5" fill="#111" text-anchor="middle">1</text>
<text x="63.6" y="374.6" font-family="DejaVu Sans,sans-serif" font-size="10.5" fill="#111" text-anchor="middle">2</text>
<rect x="1.6" y="398.6" width="34.0" height="33.9" fill="url(#lbg)" stroke="#9b9b9b"/>
<rect x="2.6" y="399.6" width="32.0" height="31.9" fill="none" stroke="#fff" stroke-opacity=".55"/>
<rect x="36.5" y="398.6" width="33.8" height="33.9" fill="url(#lbg)" stroke="#9b9b9b"/>
<rect x="37.5" y="399.6" width="31.799999999999997" height="31.9" fill="none" stroke="#fff" stroke-opacity=".55"/>
<path d="M5.6 412.5L30 419.9" fill="none" stroke="#1e1e1e" stroke-width="1.1" stroke-linecap="round" />
<path d="M24.3 402.6L18.7 427.4" fill="none" stroke="#1e1e1e" stroke-width="1.1" stroke-linecap="round" />
<circle cx="20.8" cy="417.3" r="1.75" fill="#f00"/>
<path d="M43.2 416.5L53.6 419.7" fill="none" stroke="#1e1e1e" stroke-width="1.1" stroke-linecap="round" />
<path d="M62.7 406.6L60 417" fill="none" stroke="#1e1e1e" stroke-width="1.1" stroke-linecap="round" />
<circle cx="58.7" cy="421.5" r="1.75" fill="#f00"/>
<rect x="1.6" y="441.6" width="34" height="33.9" rx="3.5" fill="#bdbdbd" stroke="#a9a9a9"/>
<text x="18.7" y="462" font-family="DejaVu Sans,sans-serif" font-size="9.9" fill="#1a1a1a" text-anchor="middle">Auto</text>
<rect x="1.6" y="484.6" width="34.0" height="33.9" fill="url(#lbg)" stroke="#9b9b9b"/>
<rect x="2.6" y="485.6" width="32.0" height="31.9" fill="none" stroke="#fff" stroke-opacity=".55"/>
<rect x="36.5" y="484.6" width="33.8" height="33.9" fill="url(#lbg)" stroke="#9b9b9b"/>
<rect x="37.5" y="485.6" width="31.799999999999997" height="31.9" fill="none" stroke="#fff" stroke-opacity=".55"/>
<path d="M14.7 489.6V504.9H30.4" fill="none" stroke="#555" stroke-width="1.3" stroke-linecap="round" />
<circle cx="28" cy="491" r="1.6" fill="#f00"/>
<text x="9.6" y="496.2" font-family="DejaVu Sans,sans-serif" font-size="10.5" fill="#111" text-anchor="middle">y</text>
<text x="27.4" y="513" font-family="DejaVu Sans,sans-serif" font-size="10.5" fill="#111" text-anchor="middle">x</text>
<path d="M41.3 509.9L57.9 493.9M41.3 509.9H65.3" fill="none" stroke="#222" stroke-width="1.1" stroke-linecap="round" />
<path d="M57.9 493.9C62 497.6 64.8 503.4 65.3 509.9" fill="none" stroke="#222" stroke-width="1.1" stroke-linecap="round" />
<circle cx="57.9" cy="493.7" r="1.6" fill="#f00"/>
<text x="46.2" y="500" font-family="DejaVu Sans,sans-serif" font-size="10" fill="#111" text-anchor="middle">r</text>
<text x="57.8" y="507.4" font-family="DejaVu Sans,sans-serif" font-size="10" fill="#111" text-anchor="middle">ɑ</text>
<rect x="1.6" y="527.6" width="34.0" height="33.9" fill="url(#lbg)" stroke="#9b9b9b"/>
<rect x="2.6" y="528.6" width="32.0" height="31.9" fill="none" stroke="#fff" stroke-opacity=".55"/>
<rect x="36.5" y="527.6" width="33.8" height="33.9" fill="url(#lbg)" stroke="#9b9b9b"/>
<rect x="37.5" y="528.6" width="31.799999999999997" height="31.9" fill="none" stroke="#fff" stroke-opacity=".55"/>
<path d="M9.9 535.8H25.9M9.9 535.8V552.1" fill="none" stroke="#aaa" stroke-width="0.6" stroke-linecap="round" />
<circle cx="9.9" cy="535.8" r="2.3" fill="#f00"/>
<circle cx="25.9" cy="535.8" r="1.2" fill="#000"/>
<circle cx="9.9" cy="552.1" r="1.2" fill="#000"/>
<text x="26.6" y="546.2" font-family="DejaVu Sans,sans-serif" font-size="10.5" fill="#111" text-anchor="middle">2</text>
<text x="16.2" y="555.6" font-family="DejaVu Sans,sans-serif" font-size="10.5" fill="#111" text-anchor="middle">1</text>
<path d="M60.8 535.8V552.1H44.8" fill="none" stroke="#aaa" stroke-width="0.6" stroke-linecap="round" />
<circle cx="60.8" cy="552.1" r="2.3" fill="#f00"/>
<circle cx="60.8" cy="535.8" r="1.2" fill="#000"/>
<circle cx="44.8" cy="552.1" r="1.2" fill="#000"/>
<text x="55.8" y="541.2" font-family="DejaVu Sans,sans-serif" font-size="10.5" fill="#111" text-anchor="middle">2</text>
<text x="45.4" y="549.4" font-family="DejaVu Sans,sans-serif" font-size="10.5" fill="#111" text-anchor="middle">1</text>
<rect x="1.6" y="570.6" width="34.0" height="33.9" fill="url(#lbg)" stroke="#9b9b9b"/>
<rect x="2.6" y="571.6" width="32.0" height="31.9" fill="none" stroke="#fff" stroke-opacity=".55"/>
<g fill="none" stroke="#f6b4b4" stroke-width="0.9"><path d="M7 579.5c0-1.6 1-2.4 2.4-2.4h18.6c1 0 1.4.5 1.4 1.5v16.6c0 .8-.5 1.2-1.3 1.2H15.6c-.8 0-1.2-.5-1.2-1.3v-2.8h-5c-1.5 0-2.4-.9-2.4-2.4z"/><circle cx="13.6" cy="584.5" r="3.2"/><path d="M25 583.8v8h-7.6z"/></g>
<circle cx="17.9" cy="586.9" r="1.6" fill="#f00"/>
<rect x="1.6" y="613.6" width="34" height="33.9" rx="3.5" fill="#bdbdbd" stroke="#a9a9a9"/>
<rect x="36.5" y="613.6" width="33.8" height="33.9" fill="url(#lbg)" stroke="#9b9b9b"/>
<rect x="37.5" y="614.6" width="31.799999999999997" height="31.9" fill="none" stroke="#fff" stroke-opacity=".55"/>
<path d="M14.6 630.3h7M18.1 626.8v7" fill="none" stroke="#333" stroke-width="1.0" stroke-linecap="round" />
<path d="M40.8 629.5H64.5M52.5 617.8V641.5" fill="none" stroke="#111" stroke-width="1.1" stroke-linecap="round" />
<use href="#rc" x="52.5" y="629.5"/>
<rect x="1.6" y="648.6" width="34.0" height="33.9" fill="url(#lbg)" stroke="#9b9b9b"/>
<rect x="2.6" y="649.6" width="32.0" height="31.9" fill="none" stroke="#fff" stroke-opacity=".55"/>
<rect x="36.5" y="648.6" width="33.8" height="33.9" fill="url(#lbg)" stroke="#9b9b9b"/>
<rect x="37.5" y="649.6" width="31.799999999999997" height="31.9" fill="none" stroke="#fff" stroke-opacity=".55"/>
<path d="M5.9 664.5H29.3" fill="none" stroke="#111" stroke-width="1.1" stroke-linecap="round" />
<use href="#rc" x="17.6" y="664.5"/>
<path d="M52.5 652.7V676.5" fill="none" stroke="#111" stroke-width="1.1" stroke-linecap="round" />
<use href="#rc" x="52.5" y="664.5"/>
<rect x="1.6" y="683.6" width="34.0" height="33.9" fill="url(#lbg)" stroke="#9b9b9b"/>
<rect x="2.6" y="684.6" width="32.0" height="31.9" fill="none" stroke="#fff" stroke-opacity=".55"/>
<path d="M8.5 709.3L27.5 698.4" fill="none" stroke="#111" stroke-width="1.1" stroke-linecap="round" />
<path d="M9 688.2l.5 4M14 689.2l1.2 3.4M18.4 691.2l2 3M22.4 694.2l2.4 2.4M25.8 705.2l3.6-1.2M25.6 709.8h4.2" fill="none" stroke="#8c8c8c" stroke-width="1.0" stroke-linecap="round" />
<use href="#rc" x="8.5" y="709.3"/>
<rect x="1.6" y="726.6" width="34.0" height="33.9" fill="url(#lbg)" stroke="#9b9b9b"/>
<rect x="2.6" y="727.6" width="32.0" height="31.9" fill="none" stroke="#fff" stroke-opacity=".55"/>
<rect x="36.5" y="726.6" width="33.8" height="33.9" fill="url(#lbg)" stroke="#9b9b9b"/>
<rect x="37.5" y="727.6" width="31.799999999999997" height="31.9" fill="none" stroke="#fff" stroke-opacity=".55"/>
<use href="#rc" x="14.9" y="737.1"/>
<path d="M16.4 739.2v10.6l2.5-2.3 1.9 4.4 1.7-.8-1.9-4.2 3.4-.2z" fill="#fff" stroke="#555" stroke-width=".8" stroke-linejoin="round"/>
<use href="#key" x="46.2" y="738.4"/>
<use href="#rc" x="52.5" y="750.4"/>
<rect x="1.6" y="769.6" width="34.0" height="33.9" fill="url(#lbg)" stroke="#9b9b9b"/>
<rect x="2.6" y="770.6" width="32.0" height="31.9" fill="none" stroke="#fff" stroke-opacity=".55"/>
<use href="#key" x="11" y="785.6"/>
<rect x="70.9" y="108" width="1.1" height="690" fill="#b9b9b9" fill-opacity=".0"/>
</svg></div>
<div id="doc" class="a">
<div id="doctitle" class="a"><span>Naamloos 1</span>
<svg width="16" height="16" viewBox="94 110.700 16 16" style="left:22px;top:2.700px"><defs><linearGradient id="gq" x1="0" y1="0" x2="1" y2="1"><stop offset="0" stop-color="#8ea2d6"/><stop offset=".45" stop-color="#24408e"/><stop offset="1" stop-color="#1c347c"/></linearGradient></defs><circle cx="102.100" cy="118.700" r="5.600" fill="#f4f4f6" stroke="url(#gq)" stroke-width="1.900"/><path d="M98.600 118.400h6.400M101.400 115.600v5.600" stroke="#a9a9b4" stroke-width=".6"/><path d="M98.800 120.600h3.400M102.600 116.600l1.600-1.200" stroke="#e88a8a" stroke-width=".6"/><path d="M102.600 119.200l4 4" stroke="#f0a818" stroke-width="1.900" stroke-linecap="round"/><path d="M102.400 119l1.600 1.600" stroke="#ffe27a" stroke-width="1.300" stroke-linecap="round"/><circle cx="107.100" cy="124" r="1.300" fill="#e86a6a"/></svg>
</div>
<svg id="rtop" width="1043" height="24" viewBox="95 131 1043 24" style="left:23px;top:23px"><g stroke="#555" stroke-width="0.9"><line x1="95.5" y1="148" x2="95.5" y2="155"/><line x1="145.5" y1="148" x2="145.5" y2="155"/><line x1="195.5" y1="148" x2="195.5" y2="155"/><line x1="245.5" y1="148" x2="245.5" y2="155"/><line x1="295.5" y1="148" x2="295.5" y2="155"/><line x1="345.5" y1="148" x2="345.5" y2="155"/><line x1="395.5" y1="148" x2="395.5" y2="155"/><line x1="445.5" y1="148" x2="445.5" y2="155"/><line x1="495.5" y1="148" x2="495.5" y2="155"/><line x1="545.5" y1="148" x2="545.5" y2="155"/><line x1="595.5" y1="148" x2="595.5" y2="155"/><line x1="645.5" y1="148" x2="645.5" y2="155"/><line x1="695.5" y1="148" x2="695.5" y2="155"/><line x1="745.5" y1="148" x2="745.5" y2="155"/><line x1="795.5" y1="148" x2="795.5" y2="155"/><line x1="845.5" y1="148" x2="845.5" y2="155"/><line x1="895.5" y1="148" x2="895.5" y2="155"/><line x1="945.5" y1="148" x2="945.5" y2="155"/><line x1="995.5" y1="148" x2="995.5" y2="155"/><line x1="1045.5" y1="148" x2="1045.5" y2="155"/><line x1="1095.5" y1="148" x2="1095.5" y2="155"/></g><g class="tk" font-size="9.2" fill="#0c0c0c" text-anchor="middle" letter-spacing="-0.35"><text x="94.9" y="141.3" letter-spacing="0.6">-50</text><text x="144.9" y="141.3" letter-spacing="0.6">-40</text><text x="194.9" y="141.3" letter-spacing="0.6">-30</text><text x="244.9" y="141.3" letter-spacing="0.6">-20</text><text x="294.9" y="141.3" letter-spacing="0.3">-10</text><text x="344.9" y="141.3" letter-spacing="0.25">0</text><text x="394.9" y="141.3" letter-spacing="-0.15">10</text><text x="444.9" y="141.3" letter-spacing="0.25">20</text><text x="494.9" y="141.3" letter-spacing="0.25">30</text><text x="544.9" y="141.3" letter-spacing="0.25">40</text><text x="594.9" y="141.3" letter-spacing="0.25">50</text><text x="644.9" y="141.3" letter-spacing="0.25">60</text><text x="694.9" y="141.3" letter-spacing="0.25">70</text><text x="744.9" y="141.3" letter-spacing="0.25">80</text><text x="794.9" y="141.3" letter-spacing="0.25">90</text><text x="844.9" y="141.3" letter-spacing="-0.15">100</text><text x="894.9" y="141.3" letter-spacing="-0.6">110</text><text x="944.9" y="141.3" letter-spacing="-0.15">120</text><text x="994.9" y="141.3" letter-spacing="-0.15">130</text><text x="1044.9" y="141.3" letter-spacing="-0.15">140</text><text x="1094.9" y="141.3" letter-spacing="-0.15">150</text></g><path d="M503.2 145.2h12l-6 6.2z" fill="#000"/></svg>
<svg id="rleft" width="23" height="577" viewBox="72 155 23 577" style="left:0;top:47px"><g stroke="#555" stroke-width="0.9"><line x1="88" y1="732.5" x2="95" y2="732.5"/><line x1="88" y1="682.5" x2="95" y2="682.5"/><line x1="88" y1="632.5" x2="95" y2="632.5"/><line x1="88" y1="582.5" x2="95" y2="582.5"/><line x1="88" y1="532.5" x2="95" y2="532.5"/><line x1="88" y1="482.5" x2="95" y2="482.5"/><line x1="88" y1="432.5" x2="95" y2="432.5"/><line x1="88" y1="382.5" x2="95" y2="382.5"/><line x1="88" y1="332.5" x2="95" y2="332.5"/><line x1="88" y1="282.5" x2="95" y2="282.5"/><line x1="88" y1="232.5" x2="95" y2="232.5"/><line x1="88" y1="182.5" x2="95" y2="182.5"/></g><g class="tk" font-size="9.2" fill="#0c0c0c" text-anchor="middle" letter-spacing="-0.35"><text transform="translate(81.0 732.2) rotate(-90)" letter-spacing="0.6">-30</text><text transform="translate(81.0 682.2) rotate(-90)" letter-spacing="0.6">-20</text><text transform="translate(81.0 632.2) rotate(-90)" letter-spacing="0.3">-10</text><text transform="translate(81.0 582.2) rotate(-90)" letter-spacing="0.25">0</text><text transform="translate(81.0 532.2) rotate(-90)" letter-spacing="-0.15">10</text><text transform="translate(81.0 482.2) rotate(-90)" letter-spacing="0.25">20</text><text transform="translate(81.0 432.2) rotate(-90)" letter-spacing="0.25">30</text><text transform="translate(81.0 382.2) rotate(-90)" letter-spacing="0.25">40</text><text transform="translate(81.0 332.2) rotate(-90)" letter-spacing="0.25">50</text><text transform="translate(81.0 282.2) rotate(-90)" letter-spacing="0.25">60</text><text transform="translate(81.0 232.2) rotate(-90)" letter-spacing="0.25">70</text><text transform="translate(81.0 182.2) rotate(-90)" letter-spacing="0.25">80</text></g><path d="M85.2 344.2v12l6.2-6z" fill="#000"/></svg>
<div id="canvas" class="a"><svg id="cv" width="1043" height="577" viewBox="95 155 1043 577" style="left:0;top:0"><defs><radialGradient id="ring" gradientUnits="userSpaceOnUse" cx="509" cy="350" r="40"><stop offset="0.735" stop-color="#6a7f90" stop-opacity="0.00"/><stop offset="0.775" stop-color="#6a7f90" stop-opacity="0.18"/><stop offset="0.8125" stop-color="#6a7f90" stop-opacity="0.32"/><stop offset="0.85" stop-color="#6a7f90" stop-opacity="0.50"/><stop offset="0.8875" stop-color="#6a7f90" stop-opacity="0.65"/><stop offset="0.925" stop-color="#6a7f90" stop-opacity="0.81"/><stop offset="0.96" stop-color="#6a7f90" stop-opacity="0.77"/><stop offset="0.9875" stop-color="#6a7f90" stop-opacity="0.27"/><stop offset="1" stop-color="#6a7f90" stop-opacity="0.00"/></radialGradient><pattern id="dots" x="145" y="182" width="50" height="50" patternUnits="userSpaceOnUse"><rect x="0" y="0" width="1" height="1" fill="#3d3d3d"/></pattern></defs><rect x="95" y="155" width="1043" height="577" fill="#000"/><g stroke="#161616" stroke-width="1.6"><line x1="345" y1="155" x2="345" y2="732"/><line x1="845" y1="155" x2="845" y2="732"/><line x1="95" y1="582" x2="1138" y2="582"/></g><rect x="95" y="155" width="1043" height="577" fill="url(#dots)"/><g stroke="#780a0a" stroke-width="1.6"><line x1="325" y1="582" x2="365" y2="582"/><line x1="345" y1="562" x2="345" y2="602"/></g><circle cx="509" cy="350" r="40" fill="url(#ring)"/><g stroke="#7e5d06" stroke-width="1.1" stroke-dasharray="4.1 1.9"><line x1="95" y1="350" x2="1138" y2="350"/><line x1="509" y1="155" x2="509" y2="732" stroke-dashoffset="3.2"/></g><g fill="#bdbdbd"><rect x="493" y="348.2" width="31.6" height="3.7" rx="0.8"/><rect x="507.1" y="334.2" width="3.8" height="31.6" rx="0.8"/></g><circle cx="509" cy="350" r="1.2" fill="#9a7a2a"/><g stroke="#990000" stroke-width="0.8" fill="none"><circle cx="495" cy="332" r="4.8"/><line x1="490.2" y1="332" x2="499.8" y2="332"/><line x1="495" y1="327.2" x2="495" y2="336.8"/></g><line x1="495.3" y1="332.3" x2="509" y2="350" stroke="#fff" stroke-width="1.3"/></svg></div>
<div id="vs" class="a"><i></i></div>
<div id="hs"></div>
<div id="zl">10 &lt; 100</div>
<div id="hist" class="a"><span><em>Opdracht:</em> line</span></div>
<div id="cl" class="a"><span>Volgende punt:</span><i></i><b class="a"><svg width="16" height="12" viewBox="0 0 16 12" style="left:4.500px;top:6.500px"><rect x=".6" y=".6" width="13.400" height="9.600" fill="#f2f2f2" stroke="#3a3a3a" stroke-width=".8"/><rect x=".3" y=".3" width="14" height="2.900" fill="#111"/><rect x="10.600" y="1.300" width="1.200" height="1" fill="#ddd"/></svg></b></div>
</div>
<div id="split" class="a"></div>
<div id="panel" class="a">
<svg width="299" height="690" viewBox="1155.5 108 299 690" style="left:-0.5px;top:0">
<defs><linearGradient id="ptg" x1="0" y1="0" x2="0" y2="1"><stop offset="0" stop-color="#f0f0f0"/><stop offset="0.12" stop-color="#e9e9e9"/><stop offset="0.6" stop-color="#e0e0e0"/><stop offset="1" stop-color="#d2d2d2"/></linearGradient><linearGradient id="pbg" x1="0" y1="0" x2="0" y2="1"><stop offset="0" stop-color="#ededed"/><stop offset="0.2" stop-color="#e6e6e6"/><stop offset="1" stop-color="#f6f6f6"/></linearGradient><g id="eye"><path d="M-7.5 0.300C-6.400-3.200-3.200-5.500 0-5.500 3.300-5.500 6.300-3.400 7.500 0.200 6.300 3.800 3.300 5.500 0 5.500-3.200 5.500-6.300 3.800-7.500 0.300z"/><ellipse cx="-0.100" cy="0.600" rx="4.900" ry="2.800" fill="#fff"/><circle cx="0" cy="-0.700" r="2.750"/><circle cx="-1.100" cy="-1.100" r="0.650" fill="#9a9a9a"/></g><g id="pencil"><path d="M0 14.200L1 10.900 11.800 0.700c.8-.7 1.800-.5 2.400.2.600.7.700 1.600 0 2.300L3.300 13.400z" fill="#dea036" stroke="#7a5212" stroke-width=".7" stroke-linejoin="round"/><path d="M11.800 0.700c.8-.7 1.800-.5 2.400.2.600.7.700 1.600 0 2.300l-1.500 1.400-2.500-2.500z" fill="#e3262c"/><path d="M0 14.200l1-3.300 2.300 2.500z" fill="#ecd2a0"/><path d="M0 14.200l.4-1.300.9 1z" fill="#333"/><path d="M2 11.200L11 2.800" stroke="#f3cf78" stroke-width=".7" fill="none"/></g></defs>
<rect x="1155.5" y="108" width="299" height="23" fill="url(#ptg)"/>
<rect x="1155.5" y="108" width="299" height="1" fill="#f4f4f4"/>
<circle cx="1164" cy="118" r="6.7" fill="#6e6e6e"/><path d="M1161.3 115.3l5.4 5.4M1166.7 115.3l-5.4 5.4" stroke="#f2f2f2" stroke-width="1.7" stroke-linecap="round"/>
<circle cx="1182" cy="118" r="6.7" fill="#6e6e6e"/><path d="M1180.6 116.9v-1.6h4.7v3.6h-1.5" fill="none" stroke="#f2f2f2" stroke-width="1.1"/><rect x="1178.8" y="117" width="4.9" height="3.8" fill="#6e6e6e" stroke="#f2f2f2" stroke-width="1.1"/>
<text class="tk" x="1322.3" y="123.2" font-size="11.3" fill="#1a1a1a" text-anchor="middle" letter-spacing="0.3">Lagenlijst</text>
<rect x="1155.5" y="155" width="299" height="643" fill="#fff"/>
<rect x="1155.20" y="130.9" width="59.9" height="24.8" fill="url(#pbg)" stroke="#a9a9a9" stroke-width="1.2"/>
<rect x="1156.30" y="132" width="57.7" height="22.600" fill="none" stroke="#fff" stroke-opacity=".5"/>
<rect x="1215.10" y="130.9" width="59.9" height="24.8" fill="url(#pbg)" stroke="#a9a9a9" stroke-width="1.2"/>
<rect x="1216.20" y="132" width="57.7" height="22.600" fill="none" stroke="#fff" stroke-opacity=".5"/>
<rect x="1275.00" y="130.9" width="59.9" height="24.8" fill="url(#pbg)" stroke="#a9a9a9" stroke-width="1.2"/>
<rect x="1276.10" y="132" width="57.7" height="22.600" fill="none" stroke="#fff" stroke-opacity=".5"/>
<rect x="1334.90" y="130.9" width="59.9" height="24.8" fill="url(#pbg)" stroke="#a9a9a9" stroke-width="1.2"/>
<rect x="1336.00" y="132" width="57.7" height="22.600" fill="none" stroke="#fff" stroke-opacity=".5"/>
<rect x="1394.80" y="130.9" width="59.9" height="24.8" fill="url(#pbg)" stroke="#a9a9a9" stroke-width="1.2"/>
<rect x="1395.90" y="132" width="57.7" height="22.600" fill="none" stroke="#fff" stroke-opacity=".5"/>
<use href="#eye" x="1185" y="142.7" fill="#000"/>
<use href="#eye" x="1245" y="142.7" fill="#a6a6a6"/>
<path d="M1299.2 143h11.4M1304.9 137.3v11.4" stroke="#b40000" stroke-width="3.6" fill="none"/><path d="M1299.7 143h10.4M1304.9 137.8v10.4" stroke="#ff0a0a" stroke-width="2.5" fill="none"/>
<path d="M1359.2 143h11.6" stroke="#b40000" stroke-width="3.6" fill="none"/><path d="M1359.7 143h10.6" stroke="#ff0a0a" stroke-width="2.5" fill="none"/>
<use href="#pencil" x="1417.6" y="135.6"/>
<rect x="1161.4" y="163.7" width="14.900" height="8" fill="#fff" stroke="#000" stroke-width="1.2"/>
<text class="tk" x="1183" y="172" font-size="13.6" fill="#000">0</text>
<use href="#pencil" x="1394.2" y="159.6" transform="translate(0 0)"/>
<use href="#eye" x="1422.8" y="166.7" fill="#000"/>
<path d="M1442.2 167.6v-3.2a3 3 0 0 1 6 0v3.2" fill="none" stroke="#bcbcbc" stroke-width="1.3"/><rect x="1440.4" y="167.3" width="9.6" height="6.5" fill="#bdbdbd"/>
<rect x="1454" y="108" width="0.7" height="690" fill="#d9d9d9"/>
</svg></div>
<div id="right" class="a">
<svg width="45" height="690" viewBox="1455 108 45 690" style="left:0;top:0">
<defs><g id="win"><rect x="0.5" y="0.5" width="27" height="27" fill="#fff" stroke="#1c1c1c" stroke-width=".8"/><rect x="0.5" y="0.5" width="27" height="4.3" fill="#000"/><rect x="1.2" y="1.1" width="3" height="3" fill="#fff"/></g></defs>
<g fill="#9c9c9c">
<rect x="1462.2" y="116" width="1.7" height="1.7"/>
<rect x="1468.2" y="116" width="1.7" height="1.7"/>
<rect x="1474.2" y="116" width="1.7" height="1.7"/>
<rect x="1480.2" y="116" width="1.7" height="1.7"/>
<rect x="1486.2" y="116" width="1.7" height="1.7"/>
</g>
<path d="M1457.5 261.5H1500" stroke="#777" stroke-width="1" stroke-dasharray="1 2.05" fill="none"/>
<path d="M1457.5 409.5H1500" stroke="#777" stroke-width="1" stroke-dasharray="1 2.05" fill="none"/>
<rect x="1456.4" y="120.1" width="42.6" height="42.6" rx="5" fill="#b3b3b3"/>
<rect x="1456.4" y="417.2" width="42.6" height="42.6" rx="5" fill="#b3b3b3"/>
<use href="#win" x="1463.1" y="127.2"/>
<use href="#win" x="1463.1" y="173.9"/>
<use href="#win" x="1463.1" y="220.2"/>
<use href="#win" x="1463.1" y="276.0"/>
<use href="#win" x="1463.1" y="322.2"/>
<use href="#win" x="1463.1" y="368.3"/>
<use href="#win" x="1463.1" y="424.4"/>
<use href="#win" x="1463.1" y="471.3"/>
<g transform="translate(1463.1 127.2)"><path d="M7 12.2l8.6-3.4v9.8L7 22.2z" fill="#8a8a8a" stroke="#555" stroke-width=".6"/><path d="M9.4 11.6l8.6-3.4v9.8l-8.6 3.6z" fill="#c9c9c9" stroke="#555" stroke-width=".6"/><path d="M12 10.8l8.6-3.4v9.8L12 20.8z" fill="#fff" stroke="#555" stroke-width=".6"/><path d="M14 18.4l4.6-7.6.4 5.8z" fill="#ffd0d0" stroke="#e03030" stroke-width=".8" stroke-linejoin="round"/></g>
<g transform="translate(1463.1 173.9)"><rect x="7.3" y="10.4" width="10" height="7.4" fill="#f6edc0" stroke="#6d6640" stroke-width=".8"/><circle cx="16.4" cy="17.6" r="4.3" fill="#f6edc0" fill-opacity=".85" stroke="#6d6640" stroke-width=".8"/></g>
<g transform="translate(1463.1 220.2)"><rect x="5.6" y="10.6" width="16.6" height="10.8" rx="2.2" fill="#f7f7f7" stroke="#bccbe6" stroke-width="1"/></g>
<g transform="translate(1463.1 276.0)"><g fill="#000"><rect x="3.6" y="8.6" width="3.8" height="3"/><rect x="3.6" y="14.6" width="3.8" height="3"/><rect x="3.6" y="20.6" width="3.8" height="3"/></g><g fill="#fff" stroke="#222" stroke-width=".7"><rect x="10.2" y="8.6" width="14" height="3"/><rect x="10.2" y="14.6" width="14" height="3"/><rect x="10.2" y="20.6" width="14" height="3"/></g></g>
<g transform="translate(1463.1 322.2)"><path d="M6.6 10.2c0-1.2 3.2-1.9 7.4-1.9s7.4.7 7.4 1.9c0 .5-.5.9-1.300 1.200L16.200 16v5.600l-2.800-1V16L7.900 11.400c-.8-.3-1.300-.7-1.300-1.200z" fill="#9a9a9a" stroke="#666" stroke-width=".6"/><ellipse cx="14" cy="10" rx="6.4" ry="1.3" fill="#777"/></g>
<g transform="translate(1463.1 368.3)"><path d="M6.2 9.400l4.200 2.400v7.400l-4.200 2.800z" fill="#f2f2f2" stroke="#444" stroke-width=".8" stroke-linejoin="round"/><rect x="10.4" y="12.2" width="10.600" height="6.600" rx="1.200" fill="#8c8c8c" stroke="#555" stroke-width=".6"/><rect x="10.4" y="12.2" width="3.2" height="6.600" fill="#e4e4e4" stroke="#555" stroke-width=".6"/><path d="M3.600 15.500H24" stroke="#f08080" stroke-width=".8" stroke-dasharray="2.4 0.800 0.800 0.800" fill="none"/></g>
<g transform="translate(1463.1 424.4)"><g font-size="2.9" fill="#555" font-family="Liberation Sans,sans-serif"><text x="2.2" y="9.800">Command: line</text><text x="2.2" y="13.200">Command: line</text><text x="2.2" y="16.600">Command: 10,40</text><text x="2.2" y="20">Command: 50,100</text></g><path d="M.5 22.600h27" stroke="#222" stroke-width=".7"/><text x="2.600" y="26.700" font-size="3.400" fill="#222">&lt;</text><text x="9.400" y="26.800" font-size="3.600" fill="#111" font-style="italic" font-weight="bold">command</text></g>
<g transform="translate(1463.1 471.3)"><rect x="7.6" y="9.600" width="13" height="13.800" rx="1" fill="#c58a35" stroke="#8f5f1d" stroke-width=".7"/><rect x="9.200" y="11.200" width="9.800" height="11" fill="#f3f3f1" stroke="#9a9a9a" stroke-width=".4"/><rect x="11" y="8.400" width="6.200" height="2.800" rx=".8" fill="#8d8d8d" stroke="#5e5e5e" stroke-width=".5"/><path d="M10.600 13.600h7M10.600 15.400h7M10.600 17.200h7M10.600 19h4.600" stroke="#bdbdbd" stroke-width=".6"/><path d="M19 19.400v2.800h-2.800z" fill="#9a9a9a"/></g>
</svg></div>
<div class="a" style="left:72px;top:797px;width:1083px;height:1px;background:#d3d3d3"></div><div class="a" style="left:1156px;top:797px;width:299px;height:1px;background:#f4f4f4"></div>
<div id="status" class="a">
<span class="n" style="left:3px;top:8px">32.8,46.4</span>
<span class="n" style="left:3px;top:28px">@2.8,-3.6</span>
<div style="left:253px;top:3px;width:1px;height:40px;background:#8c8c8c"></div>
<span class="n" style="left:256px;top:8px">56.8225&lt;55°</span>
<span class="n" style="left:256px;top:28px">@4.5607&lt;308°</span>
<i style="left:506px;top:21px"></i>
<span style="left:633px;top:18px">Volgende punt</span>
<svg width="20" height="32" viewBox="716 805 20 32" style="left:716px;top:7px"><rect x="717.400" y="806.300" width="17.400" height="29.400" rx="8.700" fill="#fff" stroke="#303030" stroke-width="1.1"/><path d="M717.500 819.400q8.600-2 17.200 0" fill="none" stroke="#303030" stroke-width="1.2"/><path d="M726.100 806.600v12" stroke="#303030" stroke-width="1"/><rect x="724.900" y="808.600" width="2.400" height="6.600" rx="1.200" fill="#fff" stroke="#303030" stroke-width="1"/></svg>
<span style="left:754px;top:18px">Klaar</span>
<i style="left:940px;top:21px"></i>
<span style="left:949px;top:18px">Geen objecten geselecteerd.</span>
<i style="left:1269px;top:21px"></i>
</div>
</body></html>
